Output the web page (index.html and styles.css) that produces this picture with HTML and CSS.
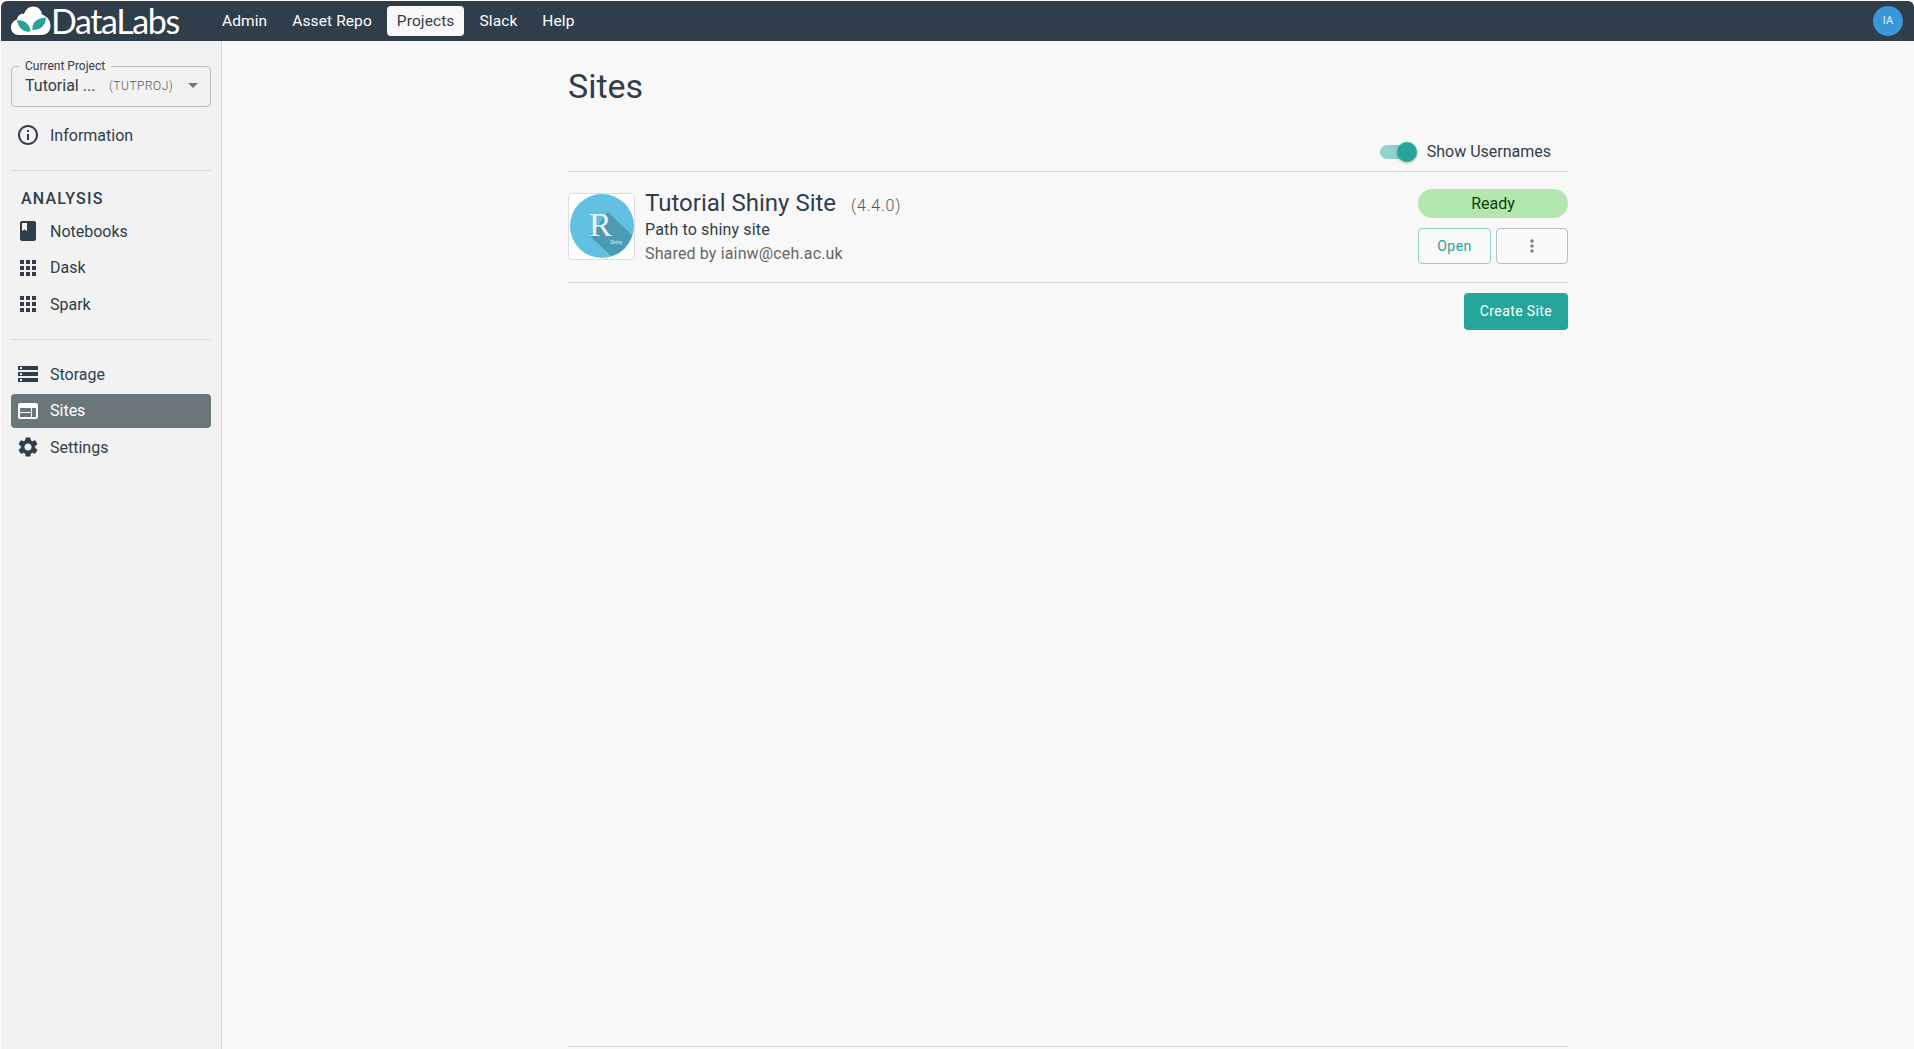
FILE: index.html
```html
<!DOCTYPE html>
<html lang="en">
<head>
<meta charset="UTF-8">
<meta name="viewport" content="width=device-width, initial-scale=1.0">
<title>DataLabs - Sites</title>
<link rel="stylesheet" href="styles.css">
</head>
<body>
<div class="app">
  <header class="topbar">
    <div class="logo">
      <svg class="logo-mark" viewBox="0 0 40 30" width="40" height="30">
        <path fill="#fff" d="M8 29C3 29 0 25.500 0 21.500 0 17.500 2.500 14.500 6 13.500 6.500 9.500 10 7 13 8 14.500 3.500 18 0.500 22 0.500 27 0.500 30.500 4 31 8.500 36 10 39.500 14.500 39.500 20 39.500 25.500 35.500 29 31 29Z"/>
        <path fill="#26a69a" d="M19.500 25.500C13 26.500 7.500 22.500 6 14.500 13 13.500 18.500 17.500 19.500 25.500Z"/>
        <path fill="#26a69a" d="M21.500 24C20.500 17 25.500 12 35 11.500 35 19 29.500 24.500 21.500 24Z"/>
      </svg>
      <span class="logo-text">DataLabs</span>
    </div>
    <nav class="topnav">
      <a class="topnav-item">Admin</a>
      <a class="topnav-item">Asset Repo</a>
      <a class="topnav-item active">Projects</a>
      <a class="topnav-item">Slack</a>
      <a class="topnav-item">Help</a>
    </nav>
    <div class="avatar">IA</div>
  </header>
  <div class="layout">
    <aside class="sidebar">
      <div class="project-select">
        <span class="project-label">Current Project</span>
        <span class="project-name">Tutorial ...</span>
        <span class="project-key">(TUTPROJ)</span>
        <span class="project-arrow"></span>
      </div>
      <a class="side-item info-item">
        <svg class="icon" viewBox="0 0 24 24"><path d="M11 7h2v2h-2zm0 4h2v6h-2zm1-9C6.480 2 2 6.480 2 12s4.480 10 10 10 10-4.480 10-10S17.520 2 12 2zm0 18c-4.410 0-8-3.590-8-8s3.590-8 8-8 8 3.590 8 8-3.590 8-8 8z"/></svg>
        Information
      </a>
      <hr class="side-divider">
      <div class="side-heading">ANALYSIS</div>
      <div class="side-group">
        <a class="side-item">
          <svg class="icon" viewBox="0 0 24 24"><path d="M18 2H6c-1.100 0-2 .9-2 2v16c0 1.100.9 2 2 2h12c1.100 0 2-.9 2-2V4c0-1.100-.9-2-2-2zM6 4h5v8l-2.500-1.500L6 12V4z"/></svg>
          Notebooks
        </a>
        <a class="side-item">
          <svg class="icon" viewBox="0 0 24 24"><path d="M4 8h4V4H4v4zm6 12h4v-4h-4v4zm-6 0h4v-4H4v4zm0-6h4v-4H4v4zm6 0h4v-4h-4v4zm6-10v4h4V4h-4zm-6 4h4V4h-4v4zm6 6h4v-4h-4v4zm0 6h4v-4h-4v4z"/></svg>
          Dask
        </a>
        <a class="side-item">
          <svg class="icon" viewBox="0 0 24 24"><path d="M4 8h4V4H4v4zm6 12h4v-4h-4v4zm-6 0h4v-4H4v4zm0-6h4v-4H4v4zm6 0h4v-4h-4v4zm6-10v4h4V4h-4zm-6 4h4V4h-4v4zm6 6h4v-4h-4v4zm0 6h4v-4h-4v4z"/></svg>
          Spark
        </a>
      </div>
      <hr class="side-divider">
      <div class="side-group">
        <a class="side-item">
          <svg class="icon" viewBox="0 0 24 24"><path d="M2 20h20v-4H2v4zm2-3h2v2H4v-2zM2 4v4h20V4H2zm4 3H4V5h2v2zm-4 7h20v-4H2v4zm2-3h2v2H4v-2z"/></svg>
          Storage
        </a>
        <a class="side-item selected">
          <svg class="icon" viewBox="0 0 24 24"><path d="M20 4H4c-1.100 0-1.990.9-1.990 2L2 18c0 1.100.9 2 2 2h16c1.100 0 2-.9 2-2V6c0-1.100-.9-2-2-2zm-5 14H4v-4h11v4zm0-5H4V9h11v4zm5 5h-4V9h4v9z"/></svg>
          Sites
        </a>
        <a class="side-item">
          <svg class="icon" viewBox="0 0 24 24"><path d="M19.140 12.940c.04-.3.06-.61.06-.94 0-.32-.02-.64-.07-.94l2.030-1.580c.18-.14.23-.41.12-.61l-1.920-3.320c-.12-.22-.37-.29-.59-.22l-2.390.96c-.5-.38-1.030-.7-1.620-.94l-.36-2.540c-.04-.24-.24-.41-.48-.41h-3.840c-.24 0-.43.17-.47.41l-.36 2.540c-.59.24-1.130.57-1.620.94l-2.390-.96c-.22-.08-.47 0-.59.22L2.740 8.870c-.12.21-.08.47.12.61l2.030 1.580c-.05.3-.09.63-.09.94s.02.64.07.94l-2.030 1.580c-.18.14-.23.41-.12.61l1.920 3.320c.12.22.37.29.59.22l2.390-.96c.5.38 1.030.7 1.620.94l.36 2.540c.05.24.24.41.48.41h3.840c.24 0 .44-.17.47-.41l.36-2.540c.59-.24 1.130-.56 1.620-.94l2.390.96c.22.08.47 0 .59-.22l1.920-3.320c.12-.22.07-.47-.12-.61l-2.010-1.580zM12 15.600c-1.980 0-3.600-1.620-3.600-3.600s1.620-3.600 3.600-3.600 3.600 1.620 3.600 3.600-1.620 3.600-3.600 3.600z"/></svg>
          Settings
        </a>
      </div>
    </aside>
    <main class="main">
      <div class="page">
        <h1 class="page-title">Sites</h1>
        <div class="toggle-row">
          <span class="switch"><span class="switch-knob"></span></span>
          <span class="toggle-label">Show Usernames</span>
        </div>
        <section class="site-row">
          <div class="site-logo">
            <svg viewBox="0 0 64 64" width="64" height="64">
              <circle cx="32" cy="32" r="32" fill="#62c1e2"/>
              <path fill="#4d9ab5" d="M20 42 L38 18 L62 41 A32 32 0 0 1 41 62Z"/>
              <text class="site-logo-r" x="19" y="42">R</text>
              <text class="site-logo-small" x="40" y="50">Shiny</text>
            </svg>
          </div>
          <div class="site-info">
            <div class="site-title">
              <span class="site-name">Tutorial Shiny Site</span>
              <span class="site-version">(4.4.0)</span>
            </div>
            <div class="site-desc">Path to shiny site</div>
            <div class="site-shared">Shared by iainw@ceh.ac.uk</div>
          </div>
          <div class="site-actions">
            <div class="status-chip">Ready</div>
            <div class="action-row">
              <button class="btn-open">Open</button>
              <button class="btn-more">
                <svg viewBox="0 0 24 24" width="20" height="20"><path d="M12 8c1.100 0 2-.9 2-2s-.9-2-2-2-2 .9-2 2 .9 2 2 2zm0 2c-1.100 0-2 .9-2 2s.9 2 2 2 2-.9 2-2-.9-2-2-2zm0 6c-1.100 0-2 .9-2 2s.9 2 2 2 2-.9 2-2-.9-2-2-2z"/></svg>
              </button>
            </div>
          </div>
        </section>
        <div class="create-row">
          <button class="btn-create">Create Site</button>
        </div>
        <div class="page-foot"></div>
      </div>
    </main>
  </div>
</div>
</body>
</html>
```

FILE: styles.css
```css
* {
  box-sizing: border-box;
}
html, body {
  height: 100%;
  margin: 0;
}
body {
  font-family: Roboto, "Noto Sans", sans-serif;
  background-color: #fff;
  color: #2f3e4a;
  overflow: hidden;
}
.app {
  height: 100%;
  padding: 1px 0 0 1px;
  display: flex;
  flex-direction: column;
}
.topbar {
  height: 40px;
  flex: none;
  display: flex;
  align-items: center;
  background: #2f3e4a;
  border-radius: 6px 6px 0 0;
  padding: 0 10px;
  color: #fff;
}
.logo {
  display: flex;
  align-items: center;
  width: 201px;
}
.logo-mark {
  flex: none;
}
.logo-text {
  font-family: Lato, sans-serif;
  font-weight: 400;
  font-size: 34px;
  letter-spacing: -1.400px;
  line-height: 40px;
}
.topnav {
  display: flex;
  gap: 5px;
}
.topnav-item {
  height: 30px;
  line-height: 30px;
  padding: 0 10px;
  border-radius: 4px;
  font-size: 15.500px;
  letter-spacing: 0.1px;
}
.topnav-item.active {
  background: #f8f8f8;
  color: #2f3e4a;
}
.avatar {
  margin-left: auto;
  margin-right: 1px;
  width: 30px;
  height: 30px;
  border-radius: 50%;
  background: #3a98d8;
  color: #e4f1fa;
  font-size: 11px;
  line-height: 30px;
  text-align: center;
}
.layout {
  flex: 1;
  display: flex;
  min-height: 0;
}
.sidebar {
  width: 221px;
  flex: none;
  background: #f2f2f2;
  border-right: 1px solid #d8d8d8;
  padding: 25px 10px 0;
}
.project-select {
  position: relative;
  height: 41px;
  border: 1px solid #bdbdbd;
  border-radius: 4px;
  display: flex;
  align-items: center;
  padding: 0 13px 2px;
  margin-bottom: 11px;
}
.project-label {
  position: absolute;
  left: 7px;
  top: -8px;
  padding: 0 6px;
  background: #f2f2f2;
  font-size: 12px;
  line-height: 15px;
}
.project-name {
  font-size: 16px;
  width: 84px;
}
.project-key {
  font-size: 12px;
  font-weight: 300;
  letter-spacing: 0.5px;
  color: #555;
}
.project-arrow {
  margin-left: auto;
  margin-right: -1px;
  width: 0;
  height: 0;
  border-left: 5px solid transparent;
  border-right: 5px solid transparent;
  border-top: 5px solid #757575;
}
.side-item {
  display: flex;
  align-items: center;
  gap: 10px;
  height: 34px;
  padding-left: 5px;
  border-radius: 4px;
  font-size: 16px;
}
.icon {
  width: 24px;
  height: 24px;
  flex: none;
  fill: #2f3e4a;
}
.side-item.selected {
  background: #6b767b;
  color: #fff;
}
.side-item.selected .icon {
  fill: #fff;
}
.side-divider {
  border: none;
  border-top: 1px solid #d8d8d8;
  margin: 18px 0 18px;
}
.side-divider + .side-group {
  margin-top: -1px;
}
.side-heading {
  margin: 0 0 5px 10px;
  height: 20px;
  line-height: 20px;
  font-size: 16px;
  font-weight: 500;
  letter-spacing: 1.200px;
}
.side-group {
  display: flex;
  flex-direction: column;
  gap: 2.600px;
}
.main {
  flex: 1;
  display: flex;
  justify-content: center;
  background: #f8f8f8;
  min-width: 0;
}
.page {
  width: 1000px;
  height: 100%;
  display: flex;
  flex-direction: column;
}
.page-title {
  margin: 23px 0 0;
  font-size: 34px;
  font-weight: 400;
  line-height: 44px;
}
.toggle-row {
  display: flex;
  align-items: center;
  justify-content: flex-end;
  height: 38px;
  margin-top: 26px;
  padding-right: 17px;
  border-bottom: 1px solid #d8d8d8;
  padding-bottom: 2px;
  gap: 12px;
}
.toggle-label {
  font-size: 16px;
}
.switch {
  position: relative;
  width: 35px;
  height: 14px;
  border-radius: 7px;
  background: #92d2cc;
}
.switch-knob {
  position: absolute;
  right: -2px;
  top: -3px;
  width: 20px;
  height: 20px;
  border-radius: 50%;
  background: #26a69a;
  box-shadow: 0 1px 3px rgba(0, 0, 0, 0.3);
}
.site-row {
  display: flex;
  align-items: center;
  height: 111px;
  border-bottom: 1px solid #d8d8d8;
}
.site-logo {
  width: 67px;
  height: 67px;
  flex: none;
  margin-bottom: 2px;
  border: 1px solid #ddd;
  border-radius: 4px;
  background: #fff;
  display: flex;
  align-items: center;
  justify-content: center;
}
.site-logo-r {
  font-family: "Liberation Serif", serif;
  font-size: 34px;
  fill: #f1f1f1;
}
.site-logo-small {
  font-family: Roboto, sans-serif;
  font-size: 5px;
  font-weight: 500;
  fill: #bfe0ec;
}
.site-info {
  flex: 1;
  margin-left: 10px;
}
.site-title {
  display: flex;
  align-items: baseline;
  gap: 15px;
  height: 28px;
  line-height: 28px;
}
.site-name {
  font-size: 24px;
}
.site-version {
  font-size: 16px;
  font-weight: 300;
  letter-spacing: 0.8px;
  color: #555;
}
.site-desc {
  font-size: 16px;
  line-height: 24px;
  margin-top: 1px;
  letter-spacing: 0.15px;
}
.site-shared {
  font-size: 16px;
  line-height: 24px;
  color: #666;
  letter-spacing: 0.15px;
}
.site-actions {
  width: 150px;
  flex: none;
  display: flex;
  flex-direction: column;
  gap: 10px;
  padding-bottom: 1px;
}
.status-chip {
  height: 29px;
  line-height: 29px;
  border-radius: 15px;
  background: #b2e8ae;
  color: #0b3d0b;
  font-size: 16px;
  text-align: center;
}
.action-row {
  display: flex;
  gap: 5px;
}
.action-row button {
  height: 36px;
  border-radius: 4px;
  background: transparent;
  font-family: inherit;
  padding: 0;
  display: flex;
  align-items: center;
  justify-content: center;
}
.btn-open {
  width: 73px;
  border: 1px solid #92d2cc;
  color: #26a69a;
  font-size: 14px;
  letter-spacing: 0.5px;
}
.btn-more {
  width: 72px;
  border: 1px solid #b4c0c8;
  fill: #71848f;
}
.create-row {
  display: flex;
  justify-content: flex-end;
  margin-top: 10px;
}
.btn-create {
  width: 104px;
  height: 37px;
  border: none;
  border-radius: 4px;
  background: #26a69a;
  color: #fff;
  font-family: inherit;
  font-size: 14px;
  letter-spacing: 0.4px;
  padding: 0 0 1px;
}
.page-foot {
  margin-top: auto;
  margin-bottom: 2px;
  border-top: 1px solid #d8d8d8;
}
```
